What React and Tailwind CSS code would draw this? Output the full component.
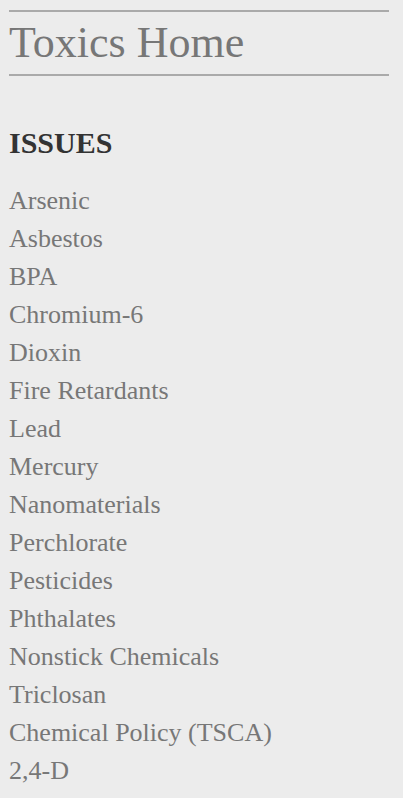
export default function App() {
  const items = [
    "Arsenic",
    "Asbestos",
    "BPA",
    "Chromium-6",
    "Dioxin",
    "Fire Retardants",
    "Lead",
    "Mercury",
    "Nanomaterials",
    "Perchlorate",
    "Pesticides",
    "Phthalates",
    "Nonstick Chemicals",
    "Triclosan",
    "Chemical Policy (TSCA)",
    "2,4-D",
  ];
  return (
    <div className="min-h-[798px] bg-[#ececec] pt-[10px]" style={{ fontFamily: '"Liberation Serif", "Times New Roman", serif' }}>
      <div className="ml-[9px] w-[380px]">
        <h1 className="border-t-2 border-b-2 border-[#aaaaaa] text-[44px] leading-[62px] text-[#777777]">
          Toxics Home
        </h1>
        <h2 className="mt-[52px] text-[30px] font-bold leading-[30px] text-[#333333]">ISSUES</h2>
        <ul className="mt-[24px]">
          {items.map((t) => (
            <li key={t} className="text-[26px] leading-[38px] text-[#777777]">
              {t}
            </li>
          ))}
        </ul>
      </div>
    </div>
  );
}
